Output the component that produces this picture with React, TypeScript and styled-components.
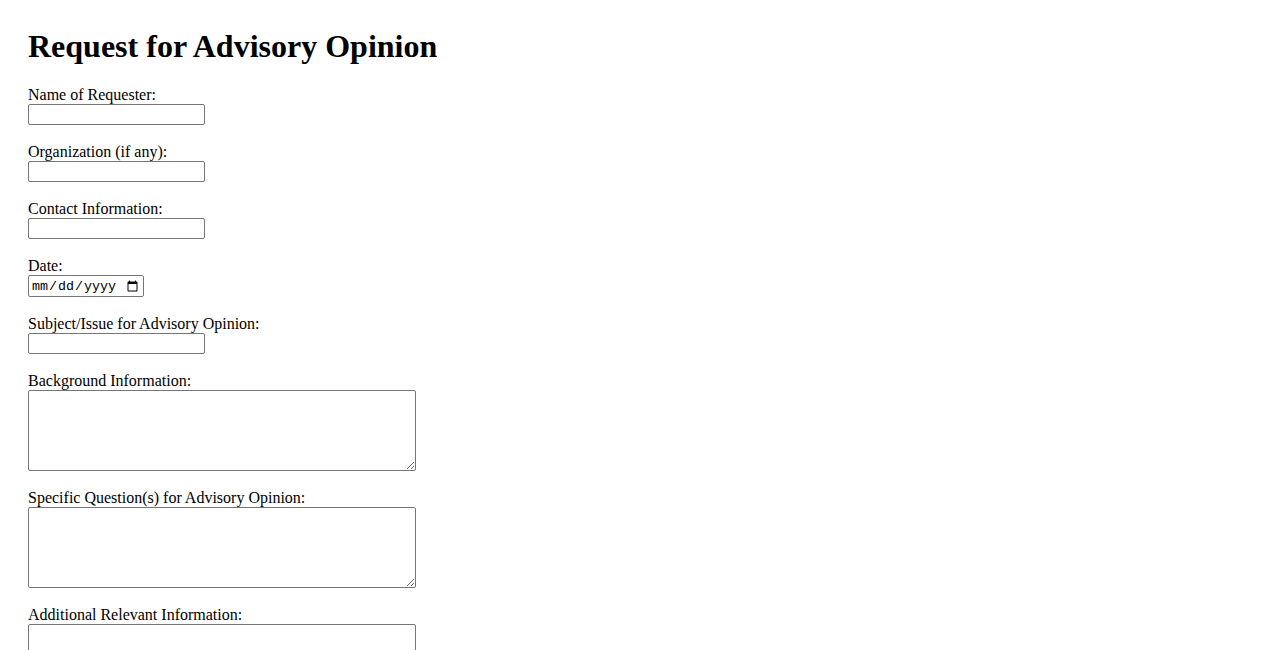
import styled, { createGlobalStyle } from 'styled-components';

const GlobalStyle = createGlobalStyle`
	body {
		margin: 8px;
		font-family: 'Liberation Serif', 'Times New Roman', serif;
		font-size: 16px;
		color: #000;
		background: #fff;
	}
`;

const Page = styled.div`
	padding: 20px;
`;

const Title = styled.h1`
	margin: 0 0 21.44px 0;
	font-size: 32px;
	font-weight: bold;
	line-height: 37px;
`;

const Form = styled.form`
	display: flex;
	flex-direction: column;
	align-items: flex-start;
`;

const Label = styled.label`
	display: block;
	line-height: 18px;
`;

const Input = styled.input<{ $width?: number; $height?: number }>`
	display: block;
	box-sizing: border-box;
	width: ${(p) => p.$width ?? 177}px;
	height: ${(p) => p.$height ?? 21}px;
	margin: 0 0 18px 0;
	border: 1px solid #767676;
	border-radius: 2px;
	padding: 1px 2px;
	font-family: 'Liberation Mono', monospace;
	font-size: 13.33px;
`;

const TextArea = styled.textarea`
	display: block;
	box-sizing: border-box;
	width: 388px;
	height: 81px;
	margin: 0 0 18px 0;
	border: 1px solid #767676;
	border-radius: 2px;
	padding: 2px;
	font-family: 'Liberation Mono', monospace;
	font-size: 13.33px;
`;

const textFields = [
	{ id: 'name', label: 'Name of Requester:' },
	{ id: 'org', label: 'Organization (if any):' },
	{ id: 'contact', label: 'Contact Information:' },
];

const areas = [
	{ id: 'background', label: 'Background Information:' },
	{ id: 'questions', label: 'Specific Question(s) for Advisory Opinion:' },
	{ id: 'additional', label: 'Additional Relevant Information:' },
];

const App = () => {
	return (
		<>
			<GlobalStyle />
			<Page>
				<Title>Request for Advisory Opinion</Title>

				<Form onSubmit={(e) => e.preventDefault()}>
					{textFields.map((f) => (
						<div key={f.id}>
							<Label htmlFor={f.id}>{f.label}</Label>
							<Input id={f.id} type='text' />
						</div>
					))}

					<div>
						<Label htmlFor='date'>Date:</Label>
						<Input id='date' type='date' $width={116} $height={22} />
					</div>

					<div>
						<Label htmlFor='subject'>Subject/Issue for Advisory Opinion:</Label>
						<Input id='subject' type='text' />
					</div>

					{areas.map((a) => (
						<div key={a.id}>
							<Label htmlFor={a.id}>{a.label}</Label>
							<TextArea id={a.id} />
						</div>
					))}
				</Form>
			</Page>
		</>
	);
};

export default App;
